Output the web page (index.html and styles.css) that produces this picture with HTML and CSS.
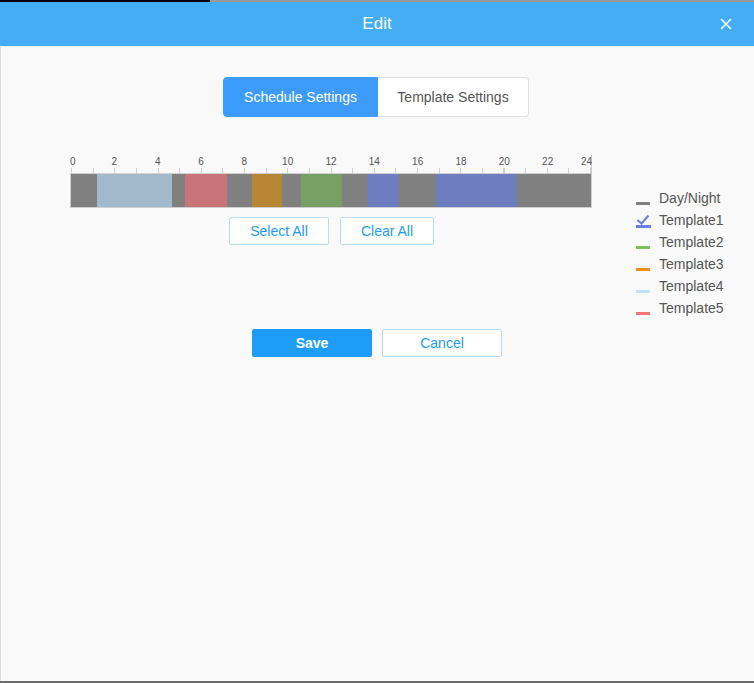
FILE: index.html
```html
<!DOCTYPE html>
<html lang="en">
<head>
    <meta charset="UTF-8">
    <meta name="viewport" content="width=device-width, initial-scale=1.0">
    <title>Edit</title>
    <link rel="stylesheet" href="styles.css">
</head>
<body>
    <div class="topstrip"></div>
    <div class="dialog">
        <div class="header">
            <h3>Edit</h3>
            <button class="close" aria-label="Close">
                <svg width="12" height="12" viewBox="0 0 12 12"><path d="M1 1L11 11M11 1L1 11" stroke="#fff" stroke-width="1.6" fill="none"/></svg>
            </button>
        </div>

        <div class="panel">
            <div class="tabs">
                <button class="tab active">Schedule Settings</button>
                <button class="tab">Template Settings</button>
            </div>

            <div class="schedule">
                <div class="timeline">
                    <div class="ruler">
                        <span class="first" style="left:0%">0</span>
                        <span style="left:8.333%">2</span>
                        <span style="left:16.667%">4</span>
                        <span style="left:25%">6</span>
                        <span style="left:33.333%">8</span>
                        <span style="left:41.667%">10</span>
                        <span style="left:50%">12</span>
                        <span style="left:58.333%">14</span>
                        <span style="left:66.667%">16</span>
                        <span style="left:75%">18</span>
                        <span style="left:83.333%">20</span>
                        <span style="left:91.667%">22</span>
                        <span class="last" style="left:100%">24</span>
                    </div>
                    <div class="bar">
                        <div class="seg daynight" style="width:26px"></div>
                        <div class="seg t4" style="width:75px"></div>
                        <div class="seg daynight" style="width:13px"></div>
                        <div class="seg t5" style="width:42px"></div>
                        <div class="seg daynight" style="width:25px"></div>
                        <div class="seg t3" style="width:30px"></div>
                        <div class="seg daynight" style="width:19px"></div>
                        <div class="seg t2" style="width:41px"></div>
                        <div class="seg daynight" style="width:26px"></div>
                        <div class="seg t1" style="width:31px"></div>
                        <div class="seg daynight" style="width:37px"></div>
                        <div class="seg t1" style="width:81px"></div>
                        <div class="seg daynight rest"></div>
                    </div>
                    <div class="actions">
                        <button class="btn-outline">Select All</button>
                        <button class="btn-outline">Clear All</button>
                    </div>
                </div>

                <ul class="legend">
                    <li><span class="swatch c-daynight"></span>Day/Night</li>
                    <li>
                        <svg class="check" width="15" height="15" viewBox="0 0 15 15"><path d="M1.5 7L5.5 10.5L12.5 2.5" stroke="#6a7fe6" stroke-width="2" fill="none"/><path d="M0 13.5H15" stroke="#6a7fe6" stroke-width="3"/></svg>Template1
                    </li>
                    <li><span class="swatch c-t2"></span>Template2</li>
                    <li><span class="swatch c-t3"></span>Template3</li>
                    <li><span class="swatch c-t4"></span>Template4</li>
                    <li><span class="swatch c-t5"></span>Template5</li>
                </ul>
            </div>

            <div class="footer">
                <button class="btn-primary">Save</button>
                <button class="btn-outline">Cancel</button>
            </div>
        </div>
    </div>
    <div class="bottombar"></div>
</body>
</html>
```

FILE: styles.css
```css
* { box-sizing: border-box; margin: 0; padding: 0; }
body { font-family: "Liberation Sans", Arial, sans-serif; background: #f9f9f9; width: 754px; height: 683px; overflow: hidden; display: flex; flex-direction: column; }
button { font-family: inherit; cursor: pointer; }

.topstrip { height: 2px; background: linear-gradient(to right, #000 0 210px, #9a9a9a 210px); }
.dialog { flex: 1; display: flex; flex-direction: column; }
.header { position: relative; height: 45px; background: #45adf6; border-bottom: 1px solid #eef4f9; display: flex; justify-content: center; align-items: center; }
.header h3 { color: #fff; font-size: 17px; font-weight: normal; }
.close { position: absolute; right: 22px; top: 16px; background: none; border: none; width: 12px; height: 12px; display: flex; }

.panel { flex: 1; background: #f9f9f9; border-left: 1px solid #dcdcdc; padding-top: 30px; }

.tabs { display: flex; justify-content: center; margin-left: -3px; }
.tab { height: 40px; font-size: 14px; border: 1px solid #e0e0e0; background: #fff; color: #555; }
.tab:first-child { width: 155px; border-radius: 4px 0 0 4px; border-color: #3d9bfc; background: #3d9bfc; color: #fff; }
.tab:last-child { width: 151px; border-left: none; border-radius: 0 4px 4px 0; }

.schedule { display: flex; align-items: flex-start; padding-left: 69px; margin-top: 38px; }
.timeline { width: 522px; display: flex; flex-direction: column; align-items: center; }
.ruler { position: relative; align-self: flex-end; width: 521px; height: 18px; border-right: 1px solid #c8c8c8; font-size: 10px; color: #555; background: repeating-linear-gradient(to right, #cfcfcf 0 1px, transparent 1px 21.625px) bottom left / 100% 5px no-repeat; }
.ruler span { position: absolute; top: 2px; transform: translateX(-50%); line-height: 10px; }
.ruler span.first { transform: translateX(-1px); }
.ruler span.last { transform: translateX(-90%); }
.bar { display: flex; width: 522px; height: 35px; border: 1px solid #cfcfcf; }
.seg { height: 100%; }
.seg.rest { flex: 1; }
.daynight { background: #808080; }
.t1 { background: #6e7dc0; }
.t2 { background: #789f64; }
.t3 { background: #b98636; }
.t4 { background: #a3bacc; }
.t5 { background: #c87478; }

.actions { display: flex; gap: 11px; margin-top: 9px; margin-left: 1px; }
.btn-outline { width: 120px; height: 28px; border: 1px solid #b7dafb; border-radius: 2px; background: #fff; color: #1d9bf6; font-size: 14px; }
.actions .btn-outline:first-child { width: 100px; }
.actions .btn-outline:last-child { width: 94px; }

.legend { list-style: none; margin-left: 44px; padding-top: 32px; font-size: 14px; color: #555; }
.legend li { display: flex; align-items: center; height: 22px; }
.swatch { width: 14px; height: 3px; margin-right: 9px; margin-top: 10px; }
.check { margin-right: 8px; margin-top: 1px; }
.c-daynight { background: #808080; }
.c-t2 { background: #7cc15a; }
.c-t3 { background: #f08c1a; }
.c-t4 { background: #bfe3ff; }
.c-t5 { background: #f27777; }

.footer { display: flex; justify-content: center; gap: 10px; margin-top: 10px; margin-left: -1px; }
.btn-primary { width: 120px; height: 28px; border: none; border-radius: 2px; background: #1e9df8; color: #fff; font-size: 14px; font-weight: bold; }

.bottombar { height: 2px; background: #6b6b6b; }
```
